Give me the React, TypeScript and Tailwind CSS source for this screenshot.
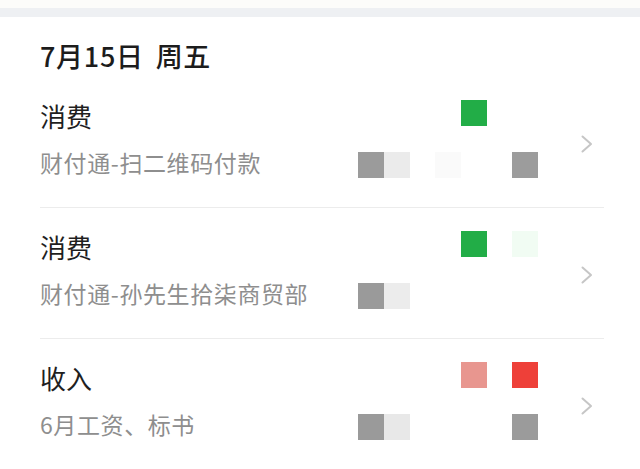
import React from "react";

type Cell = { col: number; row: number; color: string };

const rows: { title: string; sub: string; cells: Cell[] }[] = [
  {
    title: "消费",
    sub: "财付通-扫二维码付款",
    cells: [
      { col: 5, row: 1, color: "#22ad47" },
      { col: 1, row: 2, color: "#9b9b9b" },
      { col: 2, row: 2, color: "#ebebeb" },
      { col: 4, row: 2, color: "#fafafa" },
      { col: 7, row: 2, color: "#9c9c9c" },
    ],
  },
  {
    title: "消费",
    sub: "财付通-孙先生拾柒商贸部",
    cells: [
      { col: 5, row: 1, color: "#22ad47" },
      { col: 7, row: 1, color: "#f1fcf3" },
      { col: 1, row: 2, color: "#9a9a9a" },
      { col: 2, row: 2, color: "#ececec" },
    ],
  },
  {
    title: "收入",
    sub: "6月工资、标书",
    cells: [
      { col: 5, row: 1, color: "#e8968f" },
      { col: 7, row: 1, color: "#ee4039" },
      { col: 1, row: 2, color: "#9a9a9a" },
      { col: 2, row: 2, color: "#e8e8e8" },
      { col: 7, row: 2, color: "#9b9b9b" },
    ],
  },
];

const colClass: Record<number, string> = {
  1: "col-start-1",
  2: "col-start-2",
  3: "col-start-3",
  4: "col-start-4",
  5: "col-start-5",
  6: "col-start-6",
  7: "col-start-7",
};
const rowClass: Record<number, string> = { 1: "row-start-1", 2: "row-start-2" };

function Chevron() {
  return (
    <svg width="14" height="20" viewBox="0 0 14 20" fill="none" className="mr-[10px] mt-[4px]">
      <path d="M2.5 2.5 L11 10 L2.5 17.5" stroke="#c6c6c6" strokeWidth="2" strokeLinecap="round" strokeLinejoin="round" />
    </svg>
  );
}

export default function App() {
  return (
    <div
      className="w-[640px] h-[469px] overflow-hidden bg-white"
      style={{ fontFamily: '"Noto Sans CJK SC", "Noto Sans", sans-serif' }}
    >
      <div className="h-[8px] bg-[#fcfcfa]" />
      <div className="h-[9px] bg-[#eef0f3]" />
      <div className="pl-[40px] pr-[36px]">
        <div className="mt-[21px] text-[27px] leading-[35px] font-medium tracking-[0.7px] text-[#1c1c1c]">
          <span>7月15日</span>
          <span className="ml-[12px]">周五</span>
        </div>
        <div className="mt-[4px]">
          {rows.map((r, i) => (
            <div
              key={i}
              className={`flex items-center ${i < rows.length - 1 ? "border-b border-[#ececec]" : ""}`}
            >
              <div className="flex-1 pt-[22px] pb-[29px]">
                <div className="text-[26px] leading-[34px] text-[#1f1f1f]">{r.title}</div>
                <div className="mt-[13px] text-[23px] leading-[32px] tracking-[0.6px] text-[#8e8e8e]">{r.sub}</div>
              </div>
              <div className="self-start mt-[23px] grid grid-cols-[repeat(7,25.7px)] grid-rows-[26px_26px] gap-y-[26px]">
                {r.cells.map((c, j) => (
                  <div
                    key={j}
                    className={`${colClass[c.col]} ${rowClass[c.row]} w-[25.7px] h-[26px]`}
                    style={{ backgroundColor: c.color }}
                  />
                ))}
              </div>
              <div className="ml-[42px]">
                <Chevron />
              </div>
            </div>
          ))}
        </div>
      </div>
    </div>
  );
}
